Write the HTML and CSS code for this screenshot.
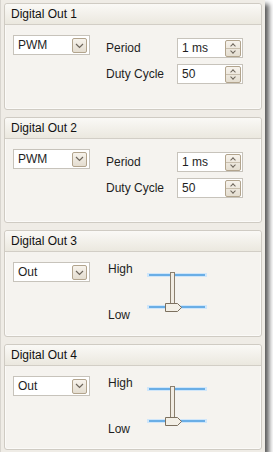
FILE: index.html
```html
<!DOCTYPE html>
<html>
<head lang="en">
    <meta charset="UTF-8">
    <title>Digital Outputs</title>
    <link rel="stylesheet" href="styles.css">
</head>
<body>
    <div class="window">
        <div class="panel">
            <div class="panel_head">Digital Out 1</div>
            <div class="panel_body">
                <div class="select">PWM<span class="drop"><svg width="9" height="6" viewBox="0 0 9 6"><path d="M1 1 L4.5 4.5 L8 1" fill="none" stroke="#6d665c" stroke-width="1.2"/></svg></span></div>
                <div class="fields">
                    <span>Period</span>
                    <div class="spin">1 ms<span class="spin_btn"><i class="up"></i><i class="down"></i></span></div>
                    <span>Duty Cycle</span>
                    <div class="spin">50<span class="spin_btn"><i class="up"></i><i class="down"></i></span></div>
                </div>
            </div>
        </div>
        <div class="panel">
            <div class="panel_head">Digital Out 2</div>
            <div class="panel_body">
                <div class="select">PWM<span class="drop"><svg width="9" height="6" viewBox="0 0 9 6"><path d="M1 1 L4.5 4.5 L8 1" fill="none" stroke="#6d665c" stroke-width="1.2"/></svg></span></div>
                <div class="fields">
                    <span>Period</span>
                    <div class="spin">1 ms<span class="spin_btn"><i class="up"></i><i class="down"></i></span></div>
                    <span>Duty Cycle</span>
                    <div class="spin">50<span class="spin_btn"><i class="up"></i><i class="down"></i></span></div>
                </div>
            </div>
        </div>
        <div class="panel">
            <div class="panel_head">Digital Out 3</div>
            <div class="panel_body">
                <div class="select">Out<span class="drop"><svg width="9" height="6" viewBox="0 0 9 6"><path d="M1 1 L4.5 4.5 L8 1" fill="none" stroke="#6d665c" stroke-width="1.2"/></svg></span></div>
                <div class="levels">
                    <span>High</span>
                    <span>Low</span>
                </div>
                <svg class="slider" width="62" height="48" viewBox="0 0 62 48">
                    <line x1="1" y1="7" x2="61" y2="7" stroke="#cfe6fa" stroke-width="4"/>
                    <line x1="3" y1="7" x2="59" y2="7" stroke="#6aaee6" stroke-width="2"/>
                    <line x1="1" y1="39" x2="61" y2="39" stroke="#cfe6fa" stroke-width="4"/>
                    <line x1="3" y1="39" x2="59" y2="39" stroke="#6aaee6" stroke-width="2"/>
                    <rect x="24.5" y="4.5" width="4" height="33" fill="#f1ece3" stroke="#8b7f6e"/>
                    <path d="M19.5 35.5 H31.5 L35.5 39.5 L31.5 43.5 H19.5 Z" fill="#f3efe6" stroke="#7c705f"/>
                </svg>
            </div>
        </div>
        <div class="panel">
            <div class="panel_head">Digital Out 4</div>
            <div class="panel_body">
                <div class="select">Out<span class="drop"><svg width="9" height="6" viewBox="0 0 9 6"><path d="M1 1 L4.5 4.5 L8 1" fill="none" stroke="#6d665c" stroke-width="1.2"/></svg></span></div>
                <div class="levels">
                    <span>High</span>
                    <span>Low</span>
                </div>
                <svg class="slider" width="62" height="48" viewBox="0 0 62 48">
                    <line x1="1" y1="7" x2="61" y2="7" stroke="#cfe6fa" stroke-width="4"/>
                    <line x1="3" y1="7" x2="59" y2="7" stroke="#6aaee6" stroke-width="2"/>
                    <line x1="1" y1="39" x2="61" y2="39" stroke="#cfe6fa" stroke-width="4"/>
                    <line x1="3" y1="39" x2="59" y2="39" stroke="#6aaee6" stroke-width="2"/>
                    <rect x="24.5" y="4.5" width="4" height="33" fill="#f1ece3" stroke="#8b7f6e"/>
                    <path d="M19.5 35.5 H31.5 L35.5 39.5 L31.5 43.5 H19.5 Z" fill="#f3efe6" stroke="#7c705f"/>
                </svg>
            </div>
        </div>
    </div>
</body>
</html>
```

FILE: styles.css
```css
body {
    margin: 0;
    background: #ffffff;
    font-family: "Liberation Sans", Arial, sans-serif;
    font-size: 12px;
    color: #1e1e1e;
}

.window {
    width: 258px;
    height: 447px;
    padding: 3px 3px 2px;
    background: #efece6;
    border-left: 1px solid #d8d5cf;
    display: flex;
    flex-direction: column;
    gap: 7px;
    box-shadow: 4px 4px 5px rgba(0, 0, 0, 0.65);
}

.panel {
    height: 105px;
    border: 1px solid #cfcbc3;
    border-radius: 3px;
    background: #f5f3ef;
    box-shadow: inset 0 0 0 1px #fbfaf8;
}

.panel_head {
    height: 20px;
    line-height: 20px;
    padding-left: 6px;
    font-size: 12px;
    color: #111;
    background: linear-gradient(#faf9f6, #ebe8df);
    border-bottom: 1px solid #d2cec6;
    border-radius: 3px 3px 0 0;
}

.panel_body {
    display: flex;
    align-items: flex-start;
    padding: 10px 0 0 8px;
}

.select {
    position: relative;
    box-sizing: border-box;
    width: 77px;
    height: 20px;
    line-height: 18px;
    padding-left: 4px;
    background: #fff;
    border: 1px solid #c7c3bb;
    margin-right: 16px;
}

.drop {
    position: absolute;
    right: 2px;
    top: 2px;
    width: 13px;
    height: 13px;
    border: 1px solid #b2a48d;
    border-radius: 2px;
    background: linear-gradient(#f7f3ec, #e4ddd0);
    display: flex;
    align-items: center;
    justify-content: center;
}

.fields {
    display: grid;
    grid-template-columns: 71px 66px;
    row-gap: 6px;
    align-items: center;
    margin-top: 3px;
}

.spin {
    position: relative;
    box-sizing: border-box;
    height: 20px;
    line-height: 18px;
    padding-left: 4px;
    background: #fff;
    border: 1px solid #c7c3bb;
}

.spin_btn {
    position: absolute;
    right: 1px;
    top: 1px;
    width: 14px;
    height: 15px;
    border: 1px solid #b2a48d;
    border-radius: 2px;
    background: linear-gradient(#f7f3ec, #e4ddd0);
    display: flex;
    flex-direction: column;
}

.spin_btn i {
    flex: 1;
    position: relative;
}

.spin_btn .up {
    border-bottom: 1px solid #c9bfae;
}

.spin_btn i::after {
    content: "";
    position: absolute;
    left: 5px;
    width: 3px;
    height: 3px;
    border-left: 1px solid #6d665c;
    border-top: 1px solid #6d665c;
}

.spin_btn .up::after {
    top: 3px;
    transform: rotate(45deg);
}

.spin_btn .down::after {
    top: 0;
    transform: rotate(225deg);
}

.levels {
    display: flex;
    flex-direction: column;
    justify-content: space-between;
    height: 60px;
    width: 38px;
    margin-left: 2px;
    margin-top: 0;
}

.slider {
    display: block;
    margin-top: 6px;
}
```
